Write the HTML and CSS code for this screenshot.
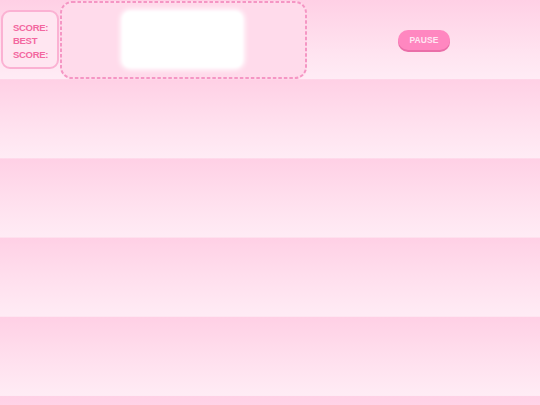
FILE: index.html
```html
<!DOCTYPE html>
<html lang="en">
<head>
<meta charset="utf-8">
<title>Stack</title>
<link rel="stylesheet" href="styles.css">
</head>
<body>
  <header class="top-bar">
    <div class="score-card">
      <span class="score-line">SCORE:</span>
      <span class="score-line">BEST</span>
      <span class="score-line">SCORE:</span>
    </div>
    <div class="preview">
      <svg class="preview-frame" width="247" height="78" viewBox="0 0 247 78" aria-hidden="true">
        <rect x="1" y="1" width="245" height="76" rx="11" ry="11"
              fill="none" stroke="#f596c4" stroke-width="2" stroke-dasharray="3.5 2"/>
      </svg>
      <div class="preview-slot"></div>
    </div>
    <div class="controls">
      <button class="pause-btn" type="button">PAUSE</button>
    </div>
  </header>
</body>
</html>
```
FILE: styles.css
```css
html, body {
  margin: 0;
  padding: 0;
  height: 100%;
}

body {
  background-image: linear-gradient(180deg, #ffd0e5 0%, #ffe0ee 55%, #ffecf5 100%);
  background-size: 100% 79.2px;
  background-repeat: repeat-y;
  font-family: "Comic Sans MS", "Liberation Sans", sans-serif;
  overflow: hidden;
}

.top-bar {
  height: 79.2px;
  display: flex;
  align-items: center;
}

.score-card {
  box-sizing: border-box;
  width: 58px;
  height: 59px;
  margin-left: 1px;
  padding: 9px 0 0 10px;
  display: flex;
  flex-direction: column;
  border: 2px solid #fbb2d3;
  border-radius: 9px;
  background: #ffe6f1;
}

.score-line {
  font-size: 9.5px;
  font-weight: bold;
  line-height: 13.2px;
  letter-spacing: -0.3px;
  color: #f3679f;
}

.preview {
  position: relative;
  box-sizing: border-box;
  width: 247px;
  height: 78px;
  margin-left: 1px;
  padding: 10px 0 0 62px;
  border-radius: 12px;
  background: #ffdbeb;
}

/* dashed outline drawn over the panel edge */
.preview-frame {
  position: absolute;
  left: 0;
  top: 0;
  pointer-events: none;
}

.preview-slot {
  width: 121px;
  height: 57px;
  border-radius: 8px;
  background: #ffffff;
  box-shadow: 0 0 4px 2px rgba(255, 255, 255, 0.9);
  filter: blur(1px);
}

.controls {
  flex: 1;
  display: flex;
  justify-content: center;
}

.pause-btn {
  width: 52px;
  height: 20px;
  margin-left: 1px;
  padding: 0;
  border: none;
  border-radius: 10px;
  background: #ff87c0;
  box-shadow: 0 2px 0 #ea6ea8;
  color: #ffe6f2;
  font-family: "Liberation Sans", Arial, sans-serif;
  font-size: 8.5px;
  font-weight: bold;
  letter-spacing: 0.1px;
}
```
